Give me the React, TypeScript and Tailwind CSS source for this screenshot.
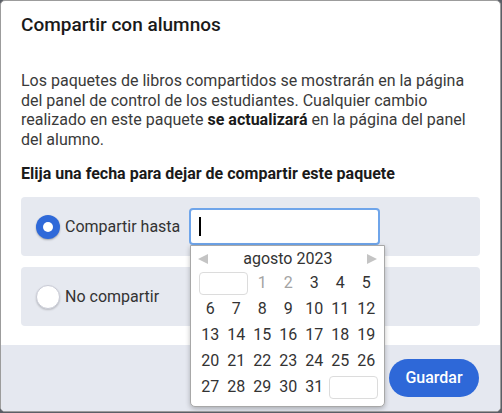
import React from "react";

const rows: (number | null | "box")[][] = [
  ["box", 1, 2, 3, 4, 5],
  [6, 7, 8, 9, 10, 11, 12],
  [13, 14, 15, 16, 17, 18, 19],
  [20, 21, 22, 23, 24, 25, 26],
  [27, 28, 29, 30, 31, "box"],
];

function Cal() {
  return (
    <div className="absolute left-[1px] top-[37px] z-10 w-[195px] rounded-b-[5px] border border-[#a8a8a8] bg-white pb-[6px] shadow-[0_2px_5px_rgba(0,0,0,0.25)]">
      <div className="flex h-[24px] items-center justify-between px-[6px] pt-[2px]">
        <svg width="12" height="12" viewBox="0 0 12 12"><path d="M11 1 L1 6 L11 11 Z" fill="#c4c4c4" /></svg>
        <span className="text-[16px] text-[#333]">agosto 2023</span>
        <svg width="12" height="12" viewBox="0 0 12 12"><path d="M1 1 L11 6 L1 11 Z" fill="#c4c4c4" /></svg>
      </div>
      <div className="grid grid-cols-[repeat(7,26px)] auto-rows-[26px] pl-[6px] text-[16px] text-[#333]">
        {rows.map((r, i) =>
          r.map((c, j) =>
            c === "box" ? (
              <div key={i + "-" + j} className="col-span-2 flex items-center justify-center">
                <div className="h-[23px] w-[49px] rounded-[4px] border border-[#dcdcdc]" />
              </div>
            ) : (
              <div
                key={i + "-" + j}
                className={
                  "flex items-center justify-center " +
                  (i === 0 && (c === 1 || c === 2) ? "text-[#a3a3a3]" : "")
                }
              >
                {c}
              </div>
            )
          )
        )}
      </div>
    </div>
  );
}

export default function App() {
  return (
    <div className="h-[413px] w-[502px] bg-[#5a5e66]" style={{ fontFamily: "Roboto, 'Noto Sans', sans-serif" }}>
      <div className="relative flex h-[412px] w-[501px] flex-col overflow-hidden rounded-[5px] border border-[#9c9c9c] bg-white">
        <div className="px-[20px] pt-[10px] text-[19px] font-medium leading-[28px] text-[#1a1a1a]">
          Compartir con alumnos
        </div>
        <p className="mt-[32px] px-[20px] text-[16px] leading-[19.5px] text-[#3a3a3a]">
          Los paquetes de libros compartidos se mostrarán en la página del panel de control de los estudiantes. Cualquier cambio realizado en este paquete{" "}
          <b className="font-bold text-[#1a1a1a]">se actualizará</b> en la página del panel del alumno.
        </p>
        <div className="mt-[15px] px-[20px] text-[16px] font-bold leading-[20px] text-[#1a1a1a]">
          Elija una fecha para dejar de compartir este paquete
        </div>
        <div className="mt-[13px] flex flex-col gap-[11px] px-[20px]">
          <div className="flex h-[59px] items-center rounded-[4px] bg-[#e6e9f0] pl-[15px]">
            <div className="flex h-[24px] w-[24px] items-center justify-center rounded-full bg-[#2f69d9] shadow-[0_1px_2px_rgba(0,0,0,0.3)]">
              <div className="h-[10px] w-[10px] rounded-full bg-white" />
            </div>
            <span className="ml-[5px] text-[16px] text-[#333]">Compartir hasta</span>
            <div className="relative ml-[9px]">
              <div className="flex h-[37px] w-[191px] items-center rounded-[4px] border-2 border-[#6fa5ea] bg-white pl-[8px]">
                <div className="h-[19px] w-[1.5px] bg-black" />
              </div>
              <Cal />
            </div>
          </div>
          <div className="flex h-[59px] items-center rounded-[4px] bg-[#e6e9f0] pl-[15px]">
            <div className="h-[24px] w-[24px] rounded-full border border-[#c9cbd6] bg-white shadow-[0_1px_2px_rgba(0,0,0,0.2)]" />
            <span className="ml-[5px] text-[16px] text-[#333]">No compartir</span>
          </div>
        </div>
        <div className="mt-auto flex h-[66px] items-center justify-end bg-[#e5e8f0] pr-[21px]">
          <button className="h-[38px] w-[90px] rounded-full bg-[#2e68d8] text-[16px] font-medium text-white">
            Guardar
          </button>
        </div>
      </div>
    </div>
  );
}
